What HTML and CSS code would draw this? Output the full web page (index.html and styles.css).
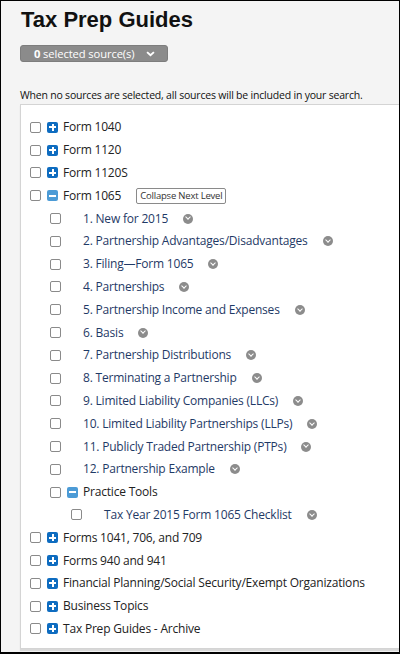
FILE: index.html
```html
<!DOCTYPE html>
<html>
<head>
<meta charset="utf-8">
<link rel="stylesheet" href="styles.css">
</head>
<body>
<div class="frame">
  <h1 class="title">Tax Prep Guides</h1>
  <button class="sources"><b>0</b>&nbsp;selected source(s)<svg class="chev" viewBox="0 0 10 7" width="9" height="6"><path d="M1 1.3 L5 5 L9 1.3" fill="none" stroke="#fff" stroke-width="2.2"/></svg></button>
  <p class="note">When no sources are selected, all sources will be included in your search.</p>
  <div class="panel">
    <ul class="tree">
      <li class="row l0"><span class="cb"></span><span class="exp plus"></span><span class="label">Form 1040</span></li>
      <li class="row l0"><span class="cb"></span><span class="exp plus"></span><span class="label">Form 1120</span></li>
      <li class="row l0"><span class="cb"></span><span class="exp plus"></span><span class="label">Form 1120S</span></li>
      <li class="row l0"><span class="cb"></span><span class="exp minus"></span><span class="label">Form 1065<span class="tip">Collapse Next Level</span></span></li>
      <li class="row l1"><span class="cb"></span><span class="exp"></span><span class="label link">1. New for 2015</span><span class="more"></span></li>
      <li class="row l1"><span class="cb"></span><span class="exp"></span><span class="label link">2. Partnership Advantages/Disadvantages</span><span class="more"></span></li>
      <li class="row l1"><span class="cb"></span><span class="exp"></span><span class="label link">3. Filing—Form 1065</span><span class="more"></span></li>
      <li class="row l1"><span class="cb"></span><span class="exp"></span><span class="label link">4. Partnerships</span><span class="more"></span></li>
      <li class="row l1"><span class="cb"></span><span class="exp"></span><span class="label link">5. Partnership Income and Expenses</span><span class="more"></span></li>
      <li class="row l1"><span class="cb"></span><span class="exp"></span><span class="label link">6. Basis</span><span class="more"></span></li>
      <li class="row l1"><span class="cb"></span><span class="exp"></span><span class="label link">7. Partnership Distributions</span><span class="more"></span></li>
      <li class="row l1"><span class="cb"></span><span class="exp"></span><span class="label link">8. Terminating a Partnership</span><span class="more"></span></li>
      <li class="row l1"><span class="cb"></span><span class="exp"></span><span class="label link">9. Limited Liability Companies (LLCs)</span><span class="more"></span></li>
      <li class="row l1"><span class="cb"></span><span class="exp"></span><span class="label link">10. Limited Liability Partnerships (LLPs)</span><span class="more"></span></li>
      <li class="row l1"><span class="cb"></span><span class="exp"></span><span class="label link">11. Publicly Traded Partnership (PTPs)</span><span class="more"></span></li>
      <li class="row l1"><span class="cb"></span><span class="exp"></span><span class="label link">12. Partnership Example</span><span class="more"></span></li>
      <li class="row l1"><span class="cb"></span><span class="exp minus"></span><span class="label">Practice Tools</span></li>
      <li class="row l2"><span class="cb"></span><span class="exp"></span><span class="label link">Tax Year 2015 Form 1065 Checklist</span><span class="more"></span></li>
      <li class="row l0"><span class="cb"></span><span class="exp plus"></span><span class="label">Forms 1041, 706, and 709</span></li>
      <li class="row l0"><span class="cb"></span><span class="exp plus"></span><span class="label">Forms 940 and 941</span></li>
      <li class="row l0"><span class="cb"></span><span class="exp plus"></span><span class="label">Financial Planning/Social Security/Exempt Organizations</span></li>
      <li class="row l0"><span class="cb"></span><span class="exp plus"></span><span class="label">Business Topics</span></li>
      <li class="row l0"><span class="cb"></span><span class="exp plus"></span><span class="label">Tax Prep Guides - Archive</span></li>
    </ul>
  </div>
</div>
</body>
</html>
```
FILE: styles.css
```css
* { box-sizing: border-box; }
html, body { margin: 0; padding: 0; }
body { width: 400px; height: 654px; overflow: hidden; }
.frame {
  width: 400px;
  height: 654px;
  border: 1px solid #000;
  border-width: 1px 1px 2px 1px;
  background: #f4f4f4;
  padding: 0 0 0 19px;
  overflow: hidden;
  font-family: "Open Sans", sans-serif;
  color: #222;
}
.title {
  margin: 6px 0 0 1px;
  font-family: "Liberation Sans", Arial, sans-serif;
  font-weight: bold;
  font-size: 22px;
  line-height: 26px;
  color: #111;
}
.sources {
  display: flex;
  align-items: center;
  margin-top: 12px;
  width: 148px;
  height: 17px;
  padding: 0 0 0 13px;
  border: 1px solid #7d7d7d;
  border-radius: 3px;
  background: #8b8b8b;
  color: #fff;
  font-family: "Open Sans", sans-serif;
  font-size: 11.2px;
  line-height: 15px;
  letter-spacing: -0.1px;
}
.sources b { font-weight: bold; }
.chev { margin-left: 12px; }
.note {
  margin: 26px 0 0 0;
  font-size: 10.5px;
  line-height: 14px;
  color: #111;
  letter-spacing: -0.2px;
}
.panel {
  margin-top: 2px;
  height: 545px;
  background: #fff;
  border: 1px solid #d4d4d4;
  border-right: none;
  box-shadow: 0 2px 1px #d8d8d8;
  padding: 11px 0 0 0;
}
.tree { list-style: none; margin: 0; padding: 0; }
.row {
  display: flex;
  align-items: center;
  height: 22.8px;
  padding-left: 9px;
}
.row.l1 { padding-left: 29px; }
.row.l2 { padding-left: 50px; }
.cb {
  flex: none;
  width: 11px;
  height: 11px;
  border: 1px solid #8a8a8a;
  border-radius: 2px;
  background: #fff;
}
.exp {
  flex: none;
  position: relative;
  width: 11px;
  height: 11px;
  margin: 0 5px 0 6px;
  border-radius: 2px;
}
.exp.plus { background: #0e6cc0; }
.exp.minus { background: #4c9bd6; }
.exp.plus::before, .exp.plus::after, .exp.minus::before {
  content: "";
  position: absolute;
  background: #fff;
}
.exp.plus::before { left: 2px; top: 4.5px; width: 7px; height: 2px; }
.exp.plus::after { left: 4.5px; top: 2px; width: 2px; height: 7px; }
.exp.minus::before { left: 2px; top: 4.5px; width: 7px; height: 2px; }
.label {
  position: relative;
  font-size: 12px;
  line-height: 16px;
  white-space: nowrap;
  color: #222;
  letter-spacing: -0.2px;
}
.label.link { color: #1f3a66; }
.more {
  flex: none;
  position: relative;
  width: 10px;
  height: 10px;
  margin-left: 15px;
  border-radius: 50%;
  background: #8c8c8c;
}
.more::after {
  content: "";
  position: absolute;
  left: 3px;
  top: 1.8px;
  width: 3px;
  height: 3px;
  border-right: 1.6px solid #fff;
  border-bottom: 1.6px solid #fff;
  transform: rotate(45deg);
}
.tip {
  position: absolute;
  left: calc(100% + 15px);
  top: 0;
  padding: 0 3px;
  height: 16px;
  border: 1px solid #8a8a8a;
  border-radius: 2px;
  background: #fff;
  font-size: 9.5px;
  line-height: 14px;
  color: #333;
  letter-spacing: -0.2px;
}
```
